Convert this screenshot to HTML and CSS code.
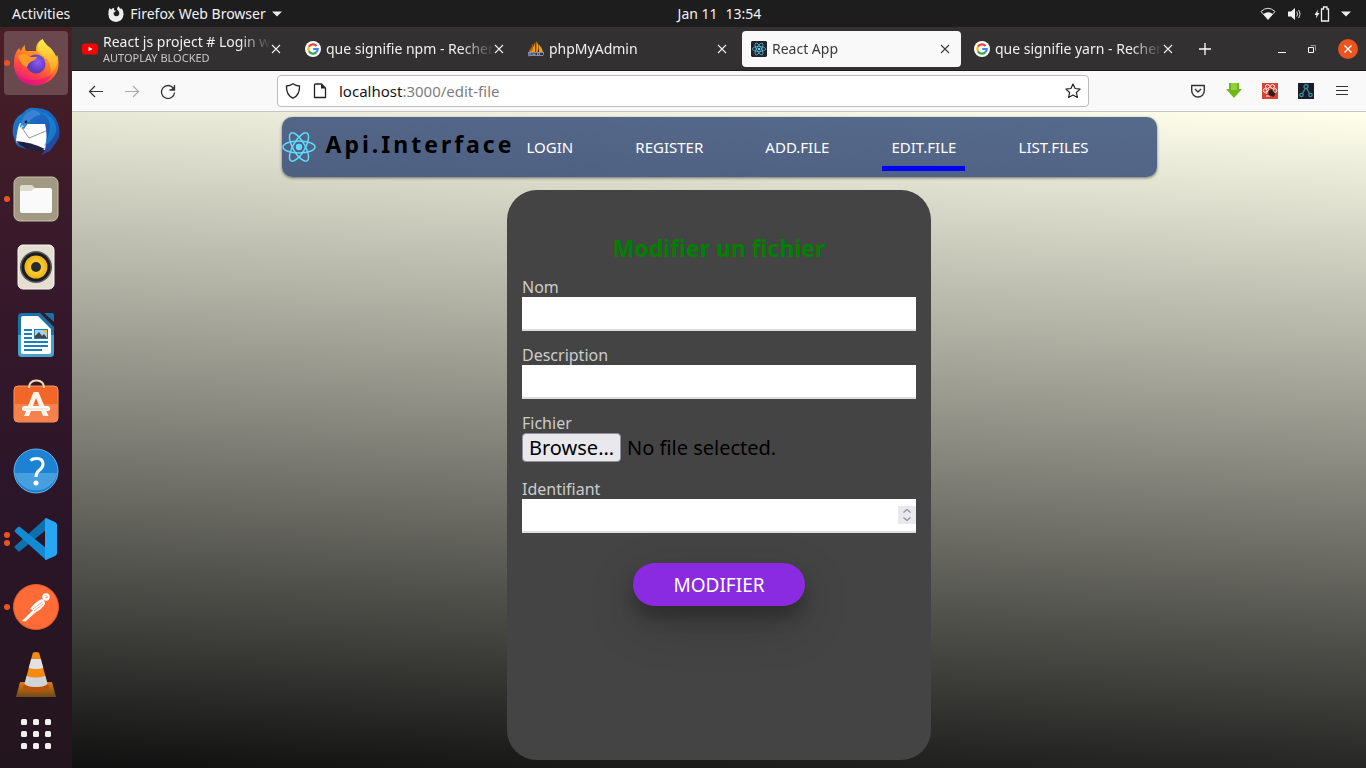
FILE: index.html
```html
<!DOCTYPE html>
<html lang="fr">
<head>
<meta charset="utf-8">
<title>React App</title>
<link rel="stylesheet" href="styles.css">
</head>
<body>
<svg class="defs" aria-hidden="true">
  <defs>
    <symbol id="google" viewBox="0 0 16 16">
      <circle cx="8" cy="8" r="8" fill="#fff"/>
      <g fill="none" stroke-width="2.2">
        <path d="M3.9 5.8A4.7 4.7 0 0 1 11.5 4.9" stroke="#ea4335"/>
        <path d="M3.9 10.2a4.9 4.9 0 0 1 0-4.4" stroke="#fbbc05"/>
        <path d="M3.9 10.2a4.7 4.7 0 0 0 7.3 1.2" stroke="#34a853"/>
        <path d="M11.2 11.4A4.7 4.7 0 0 0 12.7 8H8.2" stroke="#4285f4"/>
      </g>
    </symbol>
    <symbol id="close" viewBox="0 0 16 16"><path d="M4 4l8 8M12 4l-8 8" fill="none" stroke="currentColor" stroke-width="1.1"/></symbol>
    <symbol id="atom" viewBox="0 0 34 34">
      <g fill="none" stroke="#61dafb" stroke-width="1.5">
        <ellipse cx="17" cy="17" rx="16" ry="6"/>
        <ellipse cx="17" cy="17" rx="16" ry="6" transform="rotate(60 17 17)"/>
        <ellipse cx="17" cy="17" rx="16" ry="6" transform="rotate(120 17 17)"/>
      </g>
      <circle cx="17" cy="17" r="3.2" fill="#61dafb"/>
    </symbol>
    <linearGradient id="fxRing" x1=".8" y1="0" x2=".3" y2="1"><stop offset="0" stop-color="#ffd83b"/><stop offset=".35" stop-color="#ff9a1f"/><stop offset=".7" stop-color="#ff4a3c"/><stop offset="1" stop-color="#e31587"/></linearGradient>
    <linearGradient id="fxTail" x1="0" y1="0" x2="0" y2="1"><stop offset="0" stop-color="#fff44f"/><stop offset="1" stop-color="#ff9d20"/></linearGradient>
    <radialGradient id="fxCore" cx=".6" cy=".4"><stop offset="0" stop-color="#9059ff"/><stop offset="1" stop-color="#5b3bb8"/></radialGradient>
    <linearGradient id="tb" x1="0" y1="0" x2="1" y2="1"><stop offset="0" stop-color="#1a80d0"/><stop offset=".5" stop-color="#1b62bd"/><stop offset="1" stop-color="#2b3990"/></linearGradient>
    <linearGradient id="vlcBase" x1="0" y1="0" x2="0" y2="1"><stop offset="0" stop-color="#e07a12"/><stop offset="1" stop-color="#6d4a18"/></linearGradient>
    <radialGradient id="gold"><stop offset="0" stop-color="#ffe066"/><stop offset="1" stop-color="#edb40c"/></radialGradient>
  </defs>
</svg>

<header class="topbar">
  <div class="topbar-left">
    <button class="top-btn">Activities</button>
    <button class="top-btn app-menu">
      <svg width="16" height="16" viewBox="0 0 16 16"><path d="M1.500 2l1.700 1.600Q4.500 2 6.500 1.800 5.500 3 6 4.200l2 .6Q7 6.500 5.500 6.800 5.600 10 8.200 10.300 11.600 10 11.300 6.800 11 5 9 3.600 9 1.800 10.500.3 11.500 2.400 13.300 3.200l.3-1.200Q15.800 5 15.600 8.600 14.600 15.800 8 15.900.8 15.300.4 8.500.3 4.500 1.500 2z" fill="#eee"/></svg>
      <span>Firefox Web Browser</span>
      <svg width="10" height="6" viewBox="0 0 10 6"><path d="M0 .5h10l-5 5z" fill="#eee"/></svg>
    </button>
  </div>
  <button class="top-btn clock"><span>Jan 11</span><span>13:54</span></button>
  <button class="top-btn tray" aria-label="Système">
    <svg width="16" height="16" viewBox="0 0 16 16"><path d="M1 5.500Q8-1 15 5.500L8 13.500z" fill="none" stroke="#ddd" stroke-width="1"/><path d="M3.500 8Q8 4.500 12.500 8L8 13.500z" fill="#f2f2f2"/></svg>
    <svg width="16" height="16" viewBox="0 0 16 16"><path d="M1 5.500h3L8 2v12l-4-3.500H1z" fill="#f2f2f2"/><path d="M9.700 5.500Q11.500 8 9.700 10.500M11.700 4Q14.600 8 11.700 12" fill="none" stroke="#ddd"/></svg>
    <svg width="16" height="16" viewBox="0 0 16 16"><path d="M7.500 3h2V1h3.500v2h1.500v12h-7z" fill="none" stroke="#eee" stroke-width="1.300"/><path d="M4 3.500L.5 9h2L1.800 12.500 5.500 7h-2z" fill="#eee"/></svg>
    <svg width="10" height="6" viewBox="0 0 10 6"><path d="M0 .5h10l-5 5z" fill="#eee"/></svg>
  </button>
</header>

<div class="desktop">
<nav class="dock" aria-label="Dock">
  <button class="dock-item active one" aria-label="Firefox">
    <svg width="46" height="48" viewBox="0 0 46 48">
      <path d="M2 16Q4 11 6 9q1 2 2 3 1-4 4-6-.500 4 1 6h10q-1-8 6.500-12 3 6 8 9 2 2 3 6l1-1 1 4 2-2q3 14-3 21-6 8-18 9.500Q4 46 1 28q-.500-7 1-12z" fill="url(#fxRing)"/>
      <path d="M3 34q14 13 36 2-6 9-16 10Q9 47 3 34z" fill="#e5107f" opacity=".55"/>
      <circle cx="23" cy="25" r="9.500" fill="url(#fxCore)"/>
      <path d="M25 13q-2-8 4.500-13 3 6 8 9 6 6 7 14-1 7-7 12 1-9-3-14-4-4-9.500-8z" fill="url(#fxTail)" opacity=".9"/>
      <path d="M5 17q3-3 8-2l4 3h7q-1 3-5 4-4 2-5 6-6-1-9-11z" fill="#ff9826"/>
    </svg>
  </button>
  <button class="dock-item" aria-label="Thunderbird">
    <svg width="48" height="48" viewBox="0 0 48 48">
      <path d="M1 28Q-1 12 11 6 16 0 22 1q15-1 22 11 5 10 3 19l-4 6-5 7-9 4 4-5Q10 44 4 37z" fill="url(#tb)"/>
      <path d="M4 35Q5 21 8 16l5 1h20q3 10 0 26Q14 41 4 35z" fill="#fff"/>
      <path d="M8 18l9 13 17-7" fill="none" stroke="#777" stroke-width=".8"/>
      <path d="M4 34q15 1 29 8l-5 2Q12 44 4 34z" fill="#21203f"/>
      <path d="M8 20Q10 7 20 3q6 0 9 5-7 0-12 7l-5 7z" fill="#3a83d3"/>
      <path d="M23 3q14 4 15 16-1 11-6 20 8-4 12-14Q46 8 23 3z" fill="#0e9be0" opacity=".55"/>
      <circle cx="14" cy="15" r="1.400" fill="#123"/><path d="M9 18l3 1-3 3z" fill="#8de"/>
    </svg>
  </button>
  <button class="dock-item one" aria-label="Fichiers">
    <svg width="46" height="46" viewBox="0 0 46 46"><rect x="1" y="1" width="44" height="44" rx="6" fill="#a29983" stroke="#c8c1ad"/><path d="M7 11q0-2 2-2h10l3 3h14v8H7z" fill="#dedace"/><path d="M7 15h11l4-3h15q2 0 2 2v21q0 2-2 2H9q-2 0-2-2z" fill="#fbfafa"/></svg>
  </button>
  <button class="dock-item" aria-label="Rhythmbox">
    <svg width="38" height="46" viewBox="0 0 38 46"><rect x="1" y="1" width="36" height="44" rx="5" fill="#e5dfd2" stroke="#f8f5ee"/><circle cx="19" cy="23" r="16" fill="#5b5a5e"/><circle cx="19" cy="23" r="14.500" fill="#1c1b24"/><circle cx="19" cy="23" r="11.500" fill="url(#gold)"/><circle cx="19" cy="23" r="5" fill="#2a2a2a"/></svg>
  </button>
  <button class="dock-item" aria-label="LibreOffice Writer">
    <svg width="38" height="46" viewBox="0 0 38 46"><path d="M5 1h18l14 14v26q0 4-4 4H5q-4 0-4-4V5q0-4 4-4z" fill="#1874a8"/><path d="M1 23h36v18q0 4-4 4H5q-4 0-4-4z" fill="#48a2ce"/><path d="M6 4h15l13 13v23q0 2-2 2H6q-2 0-2-2V6q0-2 2-2z" fill="#fff"/><path d="M27 1h8q2 0 2 2v7z" fill="#1273ae"/><path d="M7 18h8M7 22h8M7 26h8M7 30h24M7 34h24M7 38h18" stroke="#1b80ba" stroke-width="2"/><rect x="17" y="17" width="14" height="10" fill="#1b80ba"/><rect x="18" y="18" width="12" height="8" fill="#9fd3ee"/><path d="M18 26v-2l4-4 3 4 2-2 3 4z" fill="#444"/><path d="M26 18h4v3q-3 0-4-3z" fill="#f9b826"/></svg>
  </button>
  <button class="dock-item" aria-label="Ubuntu Software">
    <svg width="46" height="50" viewBox="0 0 46 50"><rect x="1" y="8" width="44" height="36" rx="4" fill="#f26727" stroke="#f89768"/><path d="M1.500 26h43v14q0 3.500-3.500 3.500H5q-3.500 0-3.500-3.500z" fill="#f5824c"/><path d="M16 10q0-7.500 7.500-7.500T31 10" fill="none" stroke="#f3d9ad" stroke-width="2"/><path d="M20.500 14h5l10 24h-5.500l-7-18-7 18H11z" fill="#fff4ec"/><path d="M11.500 30.500h23" stroke="#fff" stroke-width="5" stroke-linecap="round"/><path d="M11 31h24" stroke="#f0cfc0" stroke-width="1"/></svg>
  </button>
  <button class="dock-item" aria-label="Aide">
    <svg width="46" height="46" viewBox="0 0 46 46"><circle cx="23" cy="23" r="22" fill="#1d82d4" stroke="#63b4ea"/><path d="M1.500 25h43A22 22 0 0 1 1.500 25z" fill="#46a0e0"/><path d="M17.500 12.500q2-2 6-2 6.500 0 6.500 5.500 0 3.500-4 6.500-3 2.500-3 6.500" fill="none" stroke="#fff" stroke-width="3"/><circle cx="23" cy="35" r="2.500" fill="#fff"/></svg>
  </button>
  <button class="dock-item two" aria-label="Visual Studio Code">
    <svg width="44" height="44" viewBox="0 0 44 44"><path d="M32 1L1 29q-1 1 0 2l3 3q1 1 2 0L32 13z" fill="#0d71ae"/><path d="M32 43L1 15q-1-1 0-2l3-3q1-1 2 0l26 21z" fill="#118bd3"/><path d="M31 1.500l1-.5 9 4q2 1 2 3v28q0 2-2 3l-9 4-1-.5z" fill="#27a7f3"/></svg>
  </button>
  <button class="dock-item one" aria-label="Postman">
    <svg width="46" height="46" viewBox="0 0 46 46"><circle cx="23" cy="23" r="22.500" fill="#ff6c37" stroke="#e75a28"/><circle cx="33" cy="13" r="3.700" fill="#fff"/><path d="M28.500 15q3.500 1 3.500 5-3 5-9 8l-9 8-4 1 1-2 9-9-3-1q5-7 11.500-10z" fill="#fff"/><path d="M32 11l3 2-3 1M20 25l9-7M21 27l9-7" fill="none" stroke="#ff6c37" stroke-width=".6"/><path d="M9.500 36.500h4" stroke="#fff" stroke-width="1.500"/></svg>
  </button>
  <button class="dock-item" aria-label="VLC">
    <svg width="42" height="48" viewBox="0 0 42 48"><path d="M5 31h32l4 15H1z" fill="url(#vlcBase)"/><ellipse cx="21" cy="36" rx="13" ry="5" fill="#b9520d"/><path d="M17.500 3q0-2 3.500-2t3.500 2l8 30q-3 3-11.500 3T9.500 33z" fill="#f58a0d"/><path d="M16.200 8h9.600l2.500 9q-7 2-14.600 0z" fill="#dfe3e6"/><path d="M11.600 25q9 3 18.800 0l2.100 8q-3 3-11.500 3T9.500 33z" fill="#d0d3d8"/></svg>
  </button>
  <button class="dock-item apps" aria-label="Applications">
    <svg width="30" height="30" viewBox="0 0 30 30" fill="#f2f0ee"><rect width="6" height="6" rx="1.500"/><rect x="12" width="6" height="6" rx="1.500"/><rect x="24" width="6" height="6" rx="1.500"/><rect y="12" width="6" height="6" rx="1.500"/><rect x="12" y="12" width="6" height="6" rx="1.500"/><rect x="24" y="12" width="6" height="6" rx="1.500"/><rect y="24" width="6" height="6" rx="1.500"/><rect x="12" y="24" width="6" height="6" rx="1.500"/><rect x="24" y="24" width="6" height="6" rx="1.500"/></svg>
  </button>
</nav>

<section class="browser">
  <div class="tabs">
    <div class="tab">
      <svg width="16" height="16" viewBox="0 0 16 16"><rect x="0" y="2.500" width="16" height="11" rx="3" fill="#f00"/><path d="M6.500 5.700l4 2.300-4 2.300z" fill="#fff"/></svg>
      <button class="tab-title"><span>React js project # Login w</span><small>AUTOPLAY BLOCKED</small></button>
      <button class="tab-close" aria-label="Fermer"><svg width="16" height="16"><use href="#close"/></svg></button>
    </div>
    <div class="tab">
      <svg width="16" height="16"><use href="#google"/></svg>
      <button class="tab-title"><span>que signifie npm - Recher</span></button>
      <button class="tab-close" aria-label="Fermer"><svg width="16" height="16"><use href="#close"/></svg></button>
    </div>
    <div class="tab">
      <svg width="16" height="16" viewBox="0 0 16 16"><path d="M7 1q-1 6-6 10h6zM8.500 0q3 5 1 11H8zM10.500 3q4 4 4.500 8h-4z" fill="#f89c0e"/><path d="M5 3Q4 7 1 10h3zM8 1v10" fill="#b6651b" stroke="#b6651b" stroke-width=".6"/><path d="M0 11.500h16l-1 3H1zM1 15.500V12h2v2H1M5 12v3M7 12v2M5 13.500h2M9.500 15v-3h2v2h-2" fill="none" stroke="#8c90c0" stroke-width=".9"/></svg>
      <button class="tab-title"><span>phpMyAdmin</span></button>
      <button class="tab-close" aria-label="Fermer"><svg width="16" height="16"><use href="#close"/></svg></button>
    </div>
    <div class="tab selected">
      <svg width="16" height="16" viewBox="0 0 34 34"><rect width="34" height="34" rx="3" fill="#20232a"/><use href="#atom" x="2" y="2" width="30" height="30"/></svg>
      <button class="tab-title"><span>React App</span></button>
      <button class="tab-close" aria-label="Fermer"><svg width="16" height="16"><use href="#close"/></svg></button>
    </div>
    <div class="tab">
      <svg width="16" height="16"><use href="#google"/></svg>
      <button class="tab-title"><span>que signifie yarn - Recher</span></button>
      <button class="tab-close" aria-label="Fermer"><svg width="16" height="16"><use href="#close"/></svg></button>
    </div>
    <button class="new-tab" aria-label="Nouvel onglet"><svg width="12" height="12" viewBox="0 0 12 12"><path d="M6 0v12M0 6h12" stroke="#fff" stroke-width="1.300"/></svg></button>
    <div class="window-buttons">
      <button aria-label="Réduire"><svg width="8" height="10" viewBox="0 0 8 10"><path d="M0 8.500h8" stroke="#fff"/></svg></button>
      <button aria-label="Restaurer"><svg width="8" height="8" viewBox="0 0 8 8"><path d="M.5 2.500h5v5h-5z" fill="none" stroke="#fff"/><path d="M2.500.5h5v5" fill="none" stroke="#999"/></svg></button>
      <button class="quit" aria-label="Fermer la fenêtre"><svg width="16" height="16" viewBox="0 0 16 16"><path d="M4.500 4.500l7 7M11.500 4.500l-7 7" stroke="#fff" stroke-width="1.400"/></svg></button>
    </div>
  </div>

  <div class="toolbar">
    <button class="tool" aria-label="Précédent"><svg width="16" height="16" viewBox="0 0 16 16"><path d="M15 8.500H1.500M7 3L1.500 8.500 7 14" fill="none" stroke="#333" stroke-width="1.200"/></svg></button>
    <button class="tool" aria-label="Suivant"><svg width="16" height="16" viewBox="0 0 16 16"><path d="M1 8.500h13.500M9 3l5.500 5.500L9 14" fill="none" stroke="#aaa" stroke-width="1.200"/></svg></button>
    <button class="tool" aria-label="Actualiser"><svg width="16" height="16" viewBox="0 0 16 16"><path d="M13.500 5.500A6.500 6.500 0 1 0 14.500 9.500M14.500 2v5h-5" fill="none" stroke="#333" stroke-width="1.300"/><path d="M14.500 3v4h-4z" fill="#333"/></svg></button>
    <div class="urlbar">
      <svg width="16" height="16" viewBox="0 0 16 16"><path d="M8 .8Q11 2.800 14.500 3 15 12 8 15.200 1 12 1.500 3 5 2.800 8 .8z" fill="none" stroke="#222" stroke-width="1.300"/></svg>
      <svg width="16" height="16" viewBox="0 0 16 16"><path d="M3.500 1h6l4 4v9.500h-11V2q0-1 1-1z" fill="none" stroke="#222" stroke-width="1.300" stroke-linejoin="round"/><path d="M9 1v4.500h4.500z" fill="#222"/></svg>
      <div class="address" role="textbox" contenteditable="true" spellcheck="false" aria-label="Adresse">localhost<span>:3000/edit-file</span></div>
      <button class="star" aria-label="Marquer cette page"><svg width="16" height="16" viewBox="0 0 16 16"><path d="M8 1l2.100 4.500 5 .6-3.700 3.400 1 5L8 12l-4.400 2.500 1-5L.9 6.100l5-.6z" fill="none" stroke="#222" stroke-width="1.200" stroke-linejoin="round"/></svg></button>
    </div>
    <button class="tool" aria-label="Pocket"><svg width="16" height="16" viewBox="0 0 16 16"><path d="M1.700 2.500h12.600v5.200a6.300 6.300 0 0 1-12.600 0z" fill="none" stroke="#333" stroke-width="1.400" stroke-linejoin="round"/><path d="M5 6l3 3 3-3" fill="none" stroke="#333" stroke-width="1.400"/></svg></button>
    <button class="tool" aria-label="Téléchargements"><svg width="16" height="16" viewBox="0 0 16 16"><path d="M3 0h2v1h1V0h4v1h1V0h2v6h3l-8 9-8-9h3z" fill="#72b61c"/><path d="M5 0h6v7H5z" fill="#91d03c"/></svg></button>
    <button class="tool" aria-label="Extension rouge"><svg width="16" height="16" viewBox="0 0 16 16"><path d="M0 0h16v16H0z" fill="#d94432"/><g fill="none" stroke="#fff" stroke-width=".9"><circle cx="5.500" cy="3.500" r="2"/><circle cx="10.500" cy="3.500" r="2"/><circle cx="3" cy="7.500" r="1.800"/><circle cx="13" cy="7.500" r="1.800"/><path d="M7 6L4 11M4 13h4"/></g><path d="M6.500 8l3-2 4 5-2 3-5-2z" fill="#301c1c"/></svg></button>
    <button class="tool" aria-label="Extension réseau"><svg width="16" height="16" viewBox="0 0 16 16"><path d="M0 0h16v16H0z" fill="#1b1c29"/><g fill="none" stroke="#3d8b9d" stroke-width="1.300"><circle cx="8" cy="3.500" r="2"/><circle cx="3.500" cy="12" r="1.700"/><circle cx="12.500" cy="12" r="1.700"/><path d="M7.200 5.500L4.500 10.500M8.800 5.500l2.700 5"/></g></svg></button>
    <button class="tool" aria-label="Menu"><svg width="12" height="12" viewBox="0 0 12 12"><path d="M0 1.500h12M0 5.500h12M0 9.500h12" stroke="#333" stroke-width="1.200"/></svg></button>
  </div>

  <main class="page">
    <nav class="site-nav">
      <svg width="34" height="34"><use href="#atom"/></svg>
      <h1 class="brand">Api.Interface</h1>
      <div class="links">
        <a href="#login">LOGIN</a>
        <a href="#register">REGISTER</a>
        <a href="#add">ADD.FILE</a>
        <a href="#edit" class="current">EDIT.FILE</a>
        <a href="#list">LIST.FILES</a>
      </div>
    </nav>
    <form class="card">
      <h2 class="title">Modifier un fichier</h2>
      <div class="field">
        <label for="nom">Nom</label>
        <input class="box" id="nom" type="text">
      </div>
      <div class="field">
        <label for="description">Description</label>
        <input class="box" id="description" type="text">
      </div>
      <div class="field">
        <label for="fichier">Fichier</label>
        <label class="file-row">
          <input class="file-input" id="fichier" type="file">
          <span class="browse">Browse…</span>
          <span class="file-name">No file selected.</span>
        </label>
      </div>
      <div class="field">
        <label for="identifiant">Identifiant</label>
        <div class="number">
          <input class="box" id="identifiant" type="number">
          <span class="spin" aria-hidden="true"><svg width="10" height="14" viewBox="0 0 10 14"><path d="M1.500 4.500L5 1.500l3.500 3M1.500 9.500l3.500 3 3.500-3" fill="none" stroke="#8f8f9d" stroke-width="1.300"/></svg></span>
        </div>
      </div>
      <button class="submit" type="submit">MODIFIER</button>
    </form>
  </main>
</section>
</div>
</body>
</html>
```
FILE: styles.css
```css
* { box-sizing: border-box; }

body {
  margin: 0;
  min-height: 100vh;
  display: flex;
  flex-direction: column;
  font-family: "Noto Sans", "Open Sans", sans-serif;
  font-size: 14px;
  background: #111;
}

button {
  font: inherit;
  color: inherit;
  background: none;
  border: 0;
  padding: 0;
  cursor: pointer;
}

svg { display: block; flex: none; }
.defs { position: absolute; width: 0; height: 0; }

/* System bar */
.topbar {
  display: grid;
  grid-template-columns: 1fr auto 1fr;
  align-items: center;
  height: 27px;
  padding: 0 15px 0 12px;
  background: #1d1d1d;
  color: #f2f2f2;
}
.topbar-left { display: flex; gap: 38px; }
.top-btn { display: flex; align-items: center; line-height: 20px; }
.app-menu { gap: 6px; }
.clock { gap: 8px; padding-left: 76px; }
.tray { justify-self: end; gap: 11px; }

.desktop { flex: 1; display: flex; }

/* Dock */
.dock {
  width: 72px;
  flex: none;
  display: flex;
  flex-direction: column;
  gap: 4px;
  padding: 4px;
  background: linear-gradient(#481f25, #38192a 30%, #2b1529 65%, #23151d);
}
.dock-item {
  position: relative;
  display: flex;
  align-items: center;
  justify-content: center;
  height: 64px;
  border-radius: 4px;
}
.dock-item.active { background: #6b484d; }
.dock-item.apps { height: 46px; }
.one::before, .two::before {
  content: "";
  position: absolute;
  left: 0;
  top: 29px;
  width: 6px;
  height: 6px;
  border-radius: 50%;
  background: #e95420;
}
.two::before { top: 25px; box-shadow: 0 8px #e95420; }

.browser { flex: 1; min-width: 0; display: flex; flex-direction: column; }

/* Tabs */
.tabs {
  display: flex;
  align-items: center;
  gap: 4px;
  height: 44px;
  padding: 0 8px 0 1px;
  background: #323031;
  border-bottom: 1px solid #1b1a1b;
  color: #f0f0f0;
}
.tab {
  flex: 0 1 219px;
  min-width: 0;
  height: 36px;
  display: flex;
  align-items: center;
  gap: 5px;
  padding: 0 8px 0 9px;
  border-radius: 4px;
}
.tab.selected { background: #f9f9fa; color: #3a393c; }
.tab-title {
  flex: 1;
  min-width: 0;
  margin-right: -8px;
  overflow: hidden;
  white-space: nowrap;
  text-align: left;
  line-height: 18px;
  mask-image: linear-gradient(to left, transparent, #000 32px);
}
.tab-title span, .tab-title small { display: block; }
.tab-title small { font-size: 11px; line-height: 14px; color: #c8c8c8; }
.tab-close { flex: none; }
.new-tab { padding: 10px; margin-left: 1px; }
.window-buttons { margin-left: auto; display: flex; align-items: center; gap: 22px; }
.quit {
  width: 20px;
  height: 20px;
  display: flex;
  align-items: center;
  justify-content: center;
  border-radius: 50%;
  background: #e95420;
}

/* Toolbar */
.toolbar {
  display: flex;
  align-items: center;
  height: 41px;
  padding: 0 6px;
  background: #f9f9fa;
  border-bottom: 1px solid #c4c4c4;
}
.tool { width: 36px; height: 32px; flex: none; display: flex; align-items: center; justify-content: center; }
.urlbar {
  flex: 1;
  min-width: 0;
  height: 32px;
  margin: 0 91px;
  padding: 0 7px;
  display: flex;
  align-items: center;
  gap: 11px;
  border: 1px solid #bcbcbc;
  border-radius: 4px;
  background: #fff;
}
.address { flex: 1; min-width: 0; white-space: nowrap; font-size: 15px; color: #15141a; outline: 0; }
.address span { color: #7d7d81; }

/* Page */
.page {
  flex: 1;
  display: flex;
  flex-direction: column;
  align-items: center;
  gap: 13px;
  padding: 5px 16px 8px;
  background: linear-gradient(3deg, #101010, #ffffec);
}
.site-nav {
  width: 100%;
  max-width: 875px;
  height: 60px;
  display: flex;
  align-items: center;
  border-radius: 10px;
  background: linear-gradient(3deg, #4e6082, #566a8b);
  box-shadow: 0 1px 3px rgba(0, 0, 0, 0.5);
  color: #fff;
}
.brand {
  margin: 0 0 6px 10px;
  font-size: 23px;
  line-height: 32px;
  letter-spacing: 3px;
  color: #000;
}
.links {
  flex: 1;
  display: flex;
  justify-content: space-between;
  padding: 0 59px 0 3px;
  font-size: 15px;
  line-height: 20px;
}
.links a {
  padding: 14px 9px 9px;
  border-bottom: 5px solid transparent;
  color: inherit;
  text-decoration: none;
}
.links .current { border-color: #00f; }

.card {
  flex: 1;
  width: 100%;
  max-width: 424px;
  padding: 43px 15px 32px;
  display: flex;
  flex-direction: column;
  gap: 14px;
  border-radius: 30px;
  background: #444;
}
.title {
  margin: 0;
  font-size: 23px;
  line-height: 30px;
  text-align: center;
  color: green;
}
.field { display: flex; flex-direction: column; font-size: 16px; line-height: 20px; color: #ccc; }
.box {
  width: 100%;
  height: 34px;
  padding: 0 8px;
  border: 0;
  border-bottom: 2px solid #ddd;
  background: #fff;
  font: inherit;
  font-size: 20px;
  appearance: textfield;
}
.box::-webkit-inner-spin-button { appearance: none; }
.number { position: relative; }
.spin {
  position: absolute;
  right: 0;
  top: 7px;
  width: 18px;
  height: 18px;
  display: flex;
  align-items: center;
  justify-content: center;
  background: #e9e9ed;
}
.file-row {
  position: relative;
  height: 32px;
  display: flex;
  align-items: flex-start;
  gap: 6px;
  font-size: 20px;
  line-height: 27px;
  color: #000;
}
.file-input { position: absolute; width: 1px; height: 1px; opacity: 0; }
.browse { padding: 0 6px; border: 1px solid #8f8f9d; border-radius: 4px; background: #e9e9ed; }
.file-name { padding: 1px 0; }
.submit {
  align-self: center;
  width: 172px;
  height: 43px;
  margin-top: 16px;
  border-radius: 22px;
  background: #8a2be2;
  box-shadow: 0 12px 16px rgba(0, 0, 0, 0.24), 0 17px 50px rgba(0, 0, 0, 0.19);
  font-size: 19px;
  color: #fff;
}
```
